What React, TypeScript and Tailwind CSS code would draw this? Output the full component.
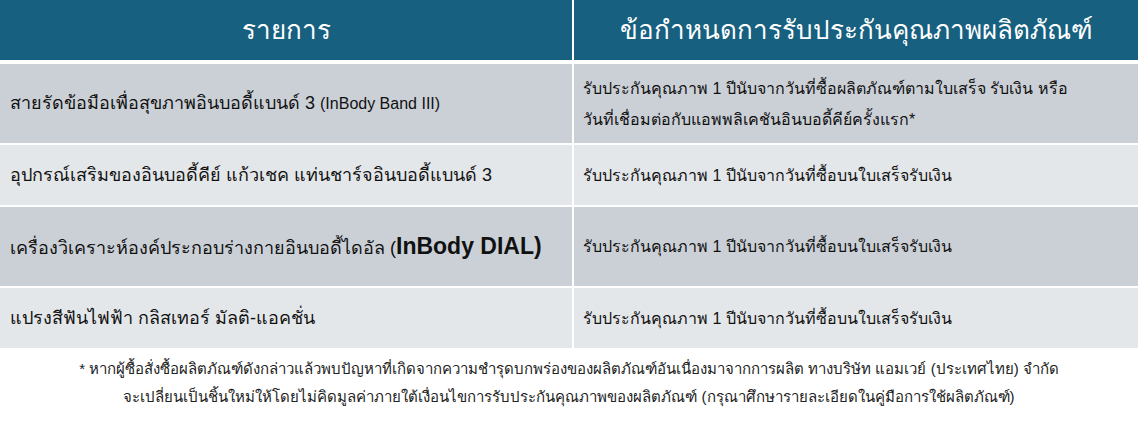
const rows = [
  {
    item: (
      <>
        สายรัดข้อมือเพื่อสุขภาพอินบอดี้แบนด์ 3{" "}
        <span className="text-[16px]">(InBody Band III)</span>
      </>
    ),
    terms: (
      <>
        รับประกันคุณภาพ 1 ปีนับจากวันที่ซื้อผลิตภัณฑ์ตามใบเสร็จ รับเงิน หรือ
        <br />
        วันที่เชื่อมต่อกับแอพพลิเคชันอินบอดี้คีย์ครั้งแรก*
      </>
    ),
    h: "h-[79px]",
    bg: "bg-[#cbd0d7]",
  },
  {
    item: <>อุปกรณ์เสริมของอินบอดี้คีย์ แก้วเชค แท่นชาร์จอินบอดี้แบนด์ 3</>,
    terms: <>รับประกันคุณภาพ 1 ปีนับจากวันที่ซื้อบนใบเสร็จรับเงิน</>,
    h: "h-[60px]",
    bg: "bg-[#e4e7ea]",
  },
  {
    item: (
      <>
        เครื่องวิเคราะห์องค์ประกอบร่างกายอินบอดี้ไดอัล (
        <span className="text-[23px] font-bold">InBody DIAL)</span>
      </>
    ),
    terms: <>รับประกันคุณภาพ 1 ปีนับจากวันที่ซื้อบนใบเสร็จรับเงิน</>,
    h: "h-[79px]",
    bg: "bg-[#cbd0d7]",
  },
  {
    item: <>แปรงสีฟันไฟฟ้า กลิสเทอร์ มัลติ-แอคชั่น</>,
    terms: <>รับประกันคุณภาพ 1 ปีนับจากวันที่ซื้อบนใบเสร็จรับเงิน</>,
    h: "h-[60px]",
    bg: "bg-[#e4e7ea]",
  },
];

export default function App() {
  return (
    <div className="w-[1138px] h-[426px] bg-white font-['Liberation_Sans',sans-serif] text-[#111]">
      <div className="flex flex-col gap-[2px]">
        <div className="grid grid-cols-[572px_1fr] gap-x-[2px] h-[60px] bg-white mb-[2px]">
          <div className="bg-[#17607f] text-white text-[26px] flex items-center justify-center">
            รายการ
          </div>
          <div className="bg-[#17607f] text-white text-[26px] flex items-center justify-center">
            ข้อกำหนดการรับประกันคุณภาพผลิตภัณฑ์
          </div>
        </div>
        {rows.map((r, i) => (
          <div key={i} className={`grid grid-cols-[572px_1fr] gap-x-[2px] ${r.h}`}>
            <div className={`${r.bg} flex items-center pl-[10px] text-[18px]`}>
              <span>{r.item}</span>
            </div>
            <div className={`${r.bg} flex items-center pl-[9px] text-[16px] leading-[31px]`}>
              <span>{r.terms}</span>
            </div>
          </div>
        ))}
      </div>
      <div className="mt-[7px] text-center text-[15px] leading-[28px] text-[#222]">
        * หากผู้ซื้อสั่งซื้อผลิตภัณฑ์ดังกล่าวแล้วพบปัญหาที่เกิดจากความชำรุดบกพร่องของผลิตภัณฑ์อันเนื่องมาจากการผลิต ทางบริษัท แอมเวย์ (ประเทศไทย) จำกัด
        <br />
        จะเปลี่ยนเป็นชิ้นใหม่ให้โดยไม่คิดมูลค่าภายใต้เงื่อนไขการรับประกันคุณภาพของผลิตภัณฑ์ (กรุณาศึกษารายละเอียดในคู่มือการใช้ผลิตภัณฑ์)
      </div>
    </div>
  );
}
